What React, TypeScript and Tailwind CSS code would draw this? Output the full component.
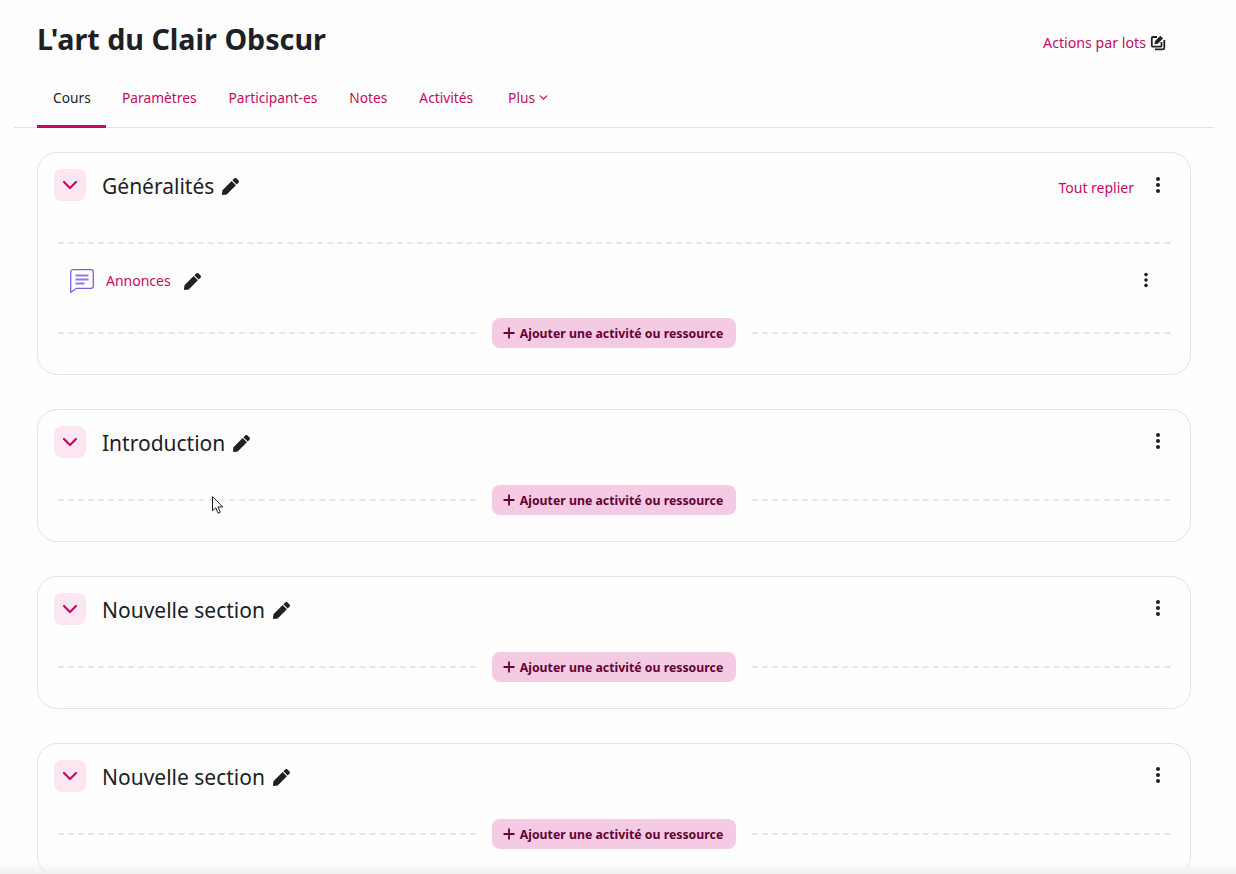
import { FaPen } from "react-icons/fa";
import { ChevronDown } from "lucide-react";

const font = "font-['Noto_Sans','Open_Sans',sans-serif]";
const tabs = ["Paramètres", "Participant-es", "Notes", "Activités"];
const sections = ["Introduction", "Nouvelle section", "Nouvelle section"];

function Dots({ className }: { className: string }) {
  return (
    <button className={`flex flex-col items-center gap-[2px] ${className}`}>
      <span className="h-1 w-1 rounded-full bg-[#1d2125]" />
      <span className="h-1 w-1 rounded-full bg-[#1d2125]" />
      <span className="h-1 w-1 rounded-full bg-[#1d2125]" />
    </button>
  );
}

function AddRow() {
  return (
    <div className="flex items-center gap-4">
      <div className="flex-1 border-t-2 border-dashed border-[#e6e7e9]" />
      <button className="flex h-[30px] w-[244px] items-center justify-center gap-[5px] rounded-lg bg-[#f4cbe3] pr-[2px] text-[12.3px] font-bold text-[#660035]">
        <svg width="12" height="12" viewBox="0 0 12 12" fill="none" stroke="currentColor" strokeWidth="1.8">
          <path d="M6 .5v11M.5 6h11" />
        </svg>
        <span className="pt-[3px]">Ajouter une activité ou ressource</span>
      </button>
      <div className="flex-1 border-t-2 border-dashed border-[#e6e7e9]" />
    </div>
  );
}

function SectionHead({ title, children }: { title: string; children?: React.ReactNode }) {
  return (
    <div className="flex h-8 items-center px-4">
      <button className="flex h-8 w-8 items-center justify-center rounded-lg bg-[#fbe6f1] text-[#c40a62]">
        <ChevronDown size={24} strokeWidth={2.2} />
      </button>
      <h3 className="ml-4 pt-[2px] text-[21px] leading-[30px] text-[#1d2125]">{title}</h3>
      <FaPen size={17} className="ml-2 mt-[3px] text-[#1d2125]" />
      {children}
    </div>
  );
}

export default function App() {
  return (
    <div className={`relative h-[874px] overflow-hidden bg-[#fefefe] ${font}`}>
      <header className="pl-[14px] pr-[22px]">
        <div className="flex h-[80px] items-start justify-between pl-[23px] pr-[48px]">
          <h1 className="mt-[17px] text-[28.7px] font-bold leading-[44px] text-[#1d2125]">L'art du Clair Obscur</h1>
          <a className="mt-[32px] flex items-center gap-1 text-[14.2px] text-[#c40a62]">
            Actions par lots
            <svg width="16" height="16" viewBox="0 0 16 16" fill="none" stroke="#1d2125" strokeWidth="1.8">
              <path d="M7 2H3a1.2 1.2 0 0 0-1.2 1.2v7.3A1.2 1.2 0 0 0 3 11.700h7.300a1.200 1.200 0 0 0 1.200-1.200V7" />
              <path d="M14.300 5v7.800a1.500 1.500 0 0 1-1.500 1.500H5" />
              <path d="M5.500 8.200l.4-1.700 4.400-4.400 1.400 1.400-4.400 4.400z" fill="#1d2125" />
            </svg>
          </a>
        </div>
        <nav className="flex h-[48px] items-stretch border-b border-[#e3e4e6] pl-[23px] text-[13.75px]">
          <a className="-mb-px flex w-[69px] items-center border-b-[3px] border-[#c40a62] px-4 pb-[9px] text-[#1d2125]">Cours</a>
          {tabs.map((t) => (
            <a key={t} className="flex items-center px-4 pb-[11px] text-[#c40a62]">{t}</a>
          ))}
          <a className="ml-[3px] flex items-center gap-[2px] px-4 pb-[11px] text-[#c40a62]">
            Plus <ChevronDown size={13} strokeWidth={2.4} className="-mt-px" />
          </a>
        </nav>
      </header>

      <main className="flex flex-col gap-[34px] pl-[37px] pr-[45px] pt-6">
        <section className="rounded-[20px] border border-[#e3e4e6] pt-4 pb-[26px]">
          <SectionHead title="Généralités">
            <a className="ml-auto mt-[6px] text-sm text-[#c40a62]">Tout replier</a>
            <Dots className="ml-[22px] mr-[14px]" />
          </SectionHead>
          <div className="px-5">
            <div className="mt-[41px] border-t-2 border-dashed border-[#e6e7e9]" />
            <div className="flex h-[74px] items-center pl-3 pr-[22px]">
              <svg width="24" height="24" viewBox="0 0 24 24" fill="none" stroke="#7d5fdc" strokeWidth="1.300">
                <path d="M3 .7h18A2.300 2.300 0 0 1 23.300 3v14a2.300 2.300 0 0 1-2.300 2.300H6.500L.7 23.300V3A2.300 2.300 0 0 1 3 .7z" />
                <path d="M5.500 6.500h13M5.500 10.500h13M5.500 14.500h9" strokeWidth="1.800" stroke="#9279e0" />
              </svg>
              <a className="ml-3 text-sm text-[#c40a62]">Annonces</a>
              <FaPen size={17} className="ml-[13px] text-[#1d2125]" />
              <Dots className="ml-auto -mt-[2px] scale-90" />
            </div>
            <AddRow />
          </div>
        </section>

        {sections.map((s, i) => (
          <section key={i} className="rounded-[20px] border border-[#e3e4e6] pt-4 pb-[26px]">
            <SectionHead title={s}>
              <Dots className="ml-auto mr-[14px] -mt-[2px]" />
            </SectionHead>
            <div className="mt-[27px] px-5">
              <AddRow />
            </div>
          </section>
        ))}
      </main>

      {/* mouse pointer caught in the capture */}
      <svg className="absolute left-[212px] top-[496px]" width="13" height="20" viewBox="0 0 13 20" fill="#fff" stroke="#1d2125" strokeWidth="1">
        <path d="M.5.700v14l3.300-3 2.200 5.500 2.300-1-2.300-5.300h4.800z" />
      </svg>
      <div className="absolute inset-x-0 bottom-0 h-3 bg-gradient-to-b from-transparent to-[#eef0f1]" />
    </div>
  );
}
